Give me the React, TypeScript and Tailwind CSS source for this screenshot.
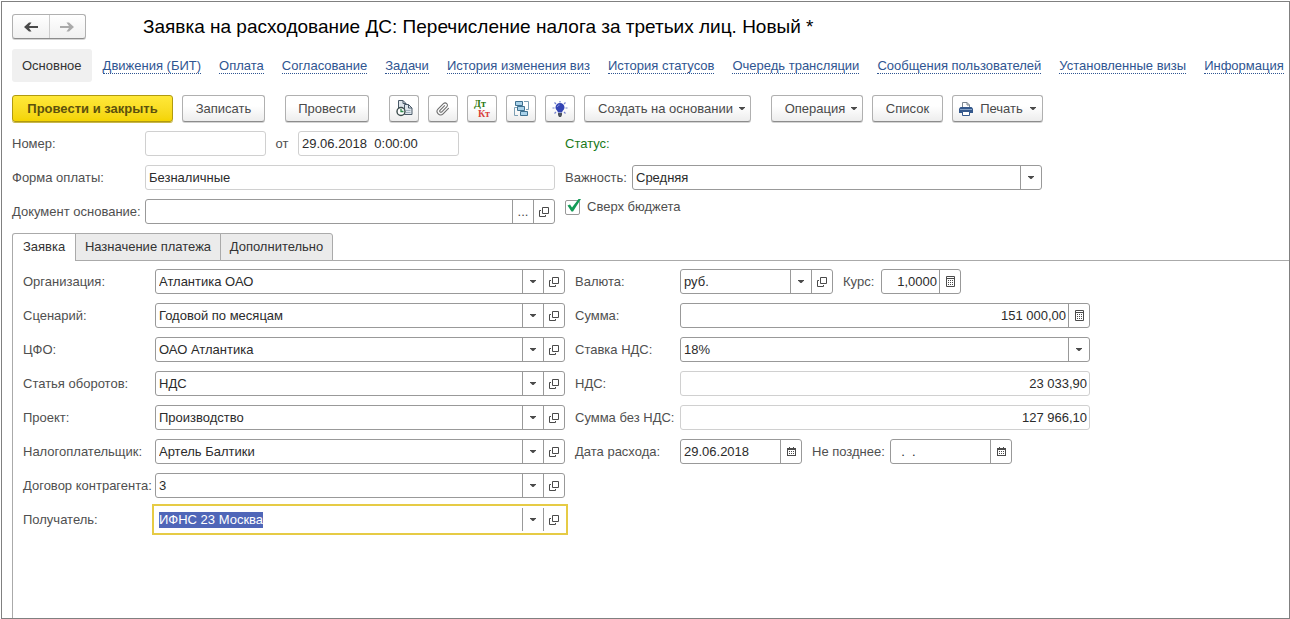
import { useEffect, useRef } from "react";
import type { ReactNode } from "react";

const BUTTON =
  "flex h-[27px] shrink-0 items-center justify-center rounded-[3px] border border-[#b0b0b0] border-b-[#8c8c8c] bg-linear-to-b from-white from-40% to-[#ededed] text-[#4a4a4a] shadow-[0_1px_0_#d4d4d4]";

function CaretIcon() {
  return (
    <svg width="6" height="3" viewBox="0 0 6 3" aria-hidden="true">
      <path d="M0 0h6v.5L3.500 3h-1L0 .5z" fill="#4a4a4a" />
    </svg>
  );
}

function OpenIcon() {
  return (
    <svg width="10" height="10" viewBox="0 0 10 10" fill="none" stroke="#4a4a4a" aria-hidden="true">
      <path d="M3.5 .5h6v6h-6z" />
      <path d="M2 3.5H.5v6h6V8" />
    </svg>
  );
}

function CalculatorIcon() {
  return (
    <svg width="9" height="11" viewBox="0 0 9 11" aria-hidden="true">
      <path d="M.5 .5h8v10h-8zM.5 2.5h8" fill="none" stroke="#4a4a4a" />
      <path
        d="M2 4h1v1H2zM4 4h1v1H4zM6 4h1v1H6zM2 6h1v1H2zM4 6h1v1H4zM6 6h1v1H6zM2 8h1v1H2zM4 8h1v1H4zM6 8h1v1H6z"
        fill="#4a4a4a"
      />
    </svg>
  );
}

function CalendarIcon() {
  return (
    <svg width="9" height="9" viewBox="0 0 9 9" aria-hidden="true">
      <path d="M0 1h2V0h1v1h3V0h1v1h2v8H0z" fill="#4a4a4a" />
      <path d="M1 3h7v5H1z" fill="#fff" />
      <path d="M2 4h1v1H2zM4 4h1v1H4zM6 4h1v1H6zM2 6h1v1H2zM4 6h1v1H4zM6 6h1v1H6z" fill="#4a4a4a" />
    </svg>
  );
}

function ArrowIcon({ back, color }: { back?: boolean; color: string }) {
  return (
    <svg width="14" height="10" viewBox="0 0 14 10" fill={color} aria-hidden="true">
      {back ? (
        <path d="M0 5L5 .5h2.500L5 4h9v2H5l2.500 3.500H5z" />
      ) : (
        <path d="M14 5L9 .5H6.500L9 4H0v2h9L6.500 9.500H9z" />
      )}
    </svg>
  );
}

function ScheduledDocumentIcon() {
  return (
    <svg width="17" height="17" viewBox="0 0 17 17" aria-hidden="true">
      <path d="M2.500 9V.5h4.500l3 3V13h-5" fill="#dfe6ec" stroke="#4a5a68" />
      <path d="M7 .5v3h3" fill="none" stroke="#4a5a68" />
      <path d="M8.500 14.500V4.500h4l3.500 3.500v6.500z" fill="#dfe6ec" stroke="#4a5a68" />
      <path d="M12.500 4.500v3.500H16" fill="none" stroke="#4a5a68" />
      <path d="M10 10.500h4.500M10 12.500h4.500" fill="none" stroke="#9fb0be" />
      <circle cx="5" cy="11.500" r="4" fill="#fff" stroke="#3c4c4c" strokeWidth="1.400" />
      <path d="M5 9v2.500h2.500" fill="none" stroke="#2f8a4c" strokeWidth="1.300" />
    </svg>
  );
}

function PaperclipIcon() {
  return (
    <svg width="14" height="14" viewBox="0 0 24 24" fill="none" stroke="#6d6d6d" strokeWidth="1.800" strokeLinecap="round" aria-hidden="true">
      <path d="M21.400 11l-9.200 9.200a6 6 0 0 1-8.500-8.500l9-9a4 4 0 0 1 5.700 5.700l-8.800 8.800a2 2 0 0 1-2.800-2.800l8-8" />
    </svg>
  );
}

function DebitCreditIcon() {
  return (
    <svg width="18" height="18" viewBox="0 0 18 18" fontFamily="Liberation Serif, serif" fontSize="10" fontWeight="bold" aria-hidden="true">
      <text x="1" y="7" fill="#2c7a12">Дт</text>
      <text x="5" y="17" fill="#d9403a">Кт</text>
    </svg>
  );
}

function StructureIcon() {
  return (
    <svg width="15" height="15" viewBox="0 0 15 15" aria-hidden="true">
      <path d="M10 .5h4.500v8H12M4 14.500H.5v-8H3M5.500 4.500v2M8.500 9v2" fill="none" stroke="#7d9fb3" />
      <g fill="#a9d2ea" stroke="#3f7190">
        <path d="M1.500 .5h7v4h-7zM3.500 5.500h7v4h-7zM6.500 10.500h7v4h-7z" />
      </g>
    </svg>
  );
}

function BulbIcon() {
  return (
    <svg width="16" height="16" viewBox="0 0 16 16" aria-hidden="true">
      <path d="M8 0v1.500M2.500 1.500l1.500 1.500M13.500 1.500L12 3M.5 7h2M13.500 7h2M2.500 12.500L4 11M13.500 12.500L12 11" stroke="#7482cc" strokeWidth="1.200" />
      <path d="M8 2a4.500 4.500 0 0 0-4.500 4.500c0 2.200 2 2.800 2.500 5h4c.5-2.200 2.500-2.800 2.500-5A4.500 4.500 0 0 0 8 2z" fill="#3344b4" />
      <path d="M6 12h4v2L9 16H7l-1-2z" fill="#4c535f" />
      <path d="M5.500 6c0-1.200.8-2 2-2" fill="none" stroke="#8f9be0" />
    </svg>
  );
}

function PrinterIcon() {
  return (
    <svg width="14" height="14" viewBox="0 0 14 14" aria-hidden="true">
      <path d="M3.500 6V.5h4.500l2.500 2.500v3" fill="#fff" stroke="#7d8790" />
      <path d="M8 .5V3h2.500" fill="none" stroke="#7d8790" />
      <path d="M1.500 5h11L14 6.500V11H0V6.500z" fill="#34588c" />
      <path d="M1 7.500h12" stroke="#86a3c8" />
      <path d="M3.500 9.500h7v4h-7z" fill="#fff" stroke="#34588c" />
    </svg>
  );
}

function Box({ children, quiet, focused, className = "" }: { children: ReactNode; quiet?: boolean; focused?: boolean; className?: string }) {
  const tone = focused
    ? "border-transparent outline-2 outline-offset-1 outline-[#e6cb45]"
    : quiet
      ? "rounded-[3px] border-[#d0d0d0]"
      : "rounded-[3px] border-[#999]";
  return <div className={`relative flex h-[25px] min-w-0 border bg-white ${tone} ${className}`}>{children}</div>;
}

function FieldButton({ label, children }: { label: string; children: ReactNode }) {
  return (
    <button type="button" aria-label={label} className="flex w-[21px] shrink-0 items-center justify-center border-l border-[#999] text-[#4a4a4a]">
      {children}
    </button>
  );
}

function TextInput({ id, value, right, readOnly }: { id: string; value: string; right?: boolean; readOnly?: boolean }) {
  return (
    <input
      id={id}
      defaultValue={value}
      readOnly={readOnly}
      className={`w-full min-w-0 flex-1 bg-transparent text-[#2b2b2b] outline-none ${right ? "pr-0.5 text-right" : "pl-[3px]"}`}
    />
  );
}

function Dropdown({ id, value }: { id: string; value: string }) {
  return (
    <div className="relative flex min-w-0 flex-1">
      <select id={id} defaultValue={value} className="w-full min-w-0 appearance-none bg-transparent pr-6 pl-[3px] text-[#2b2b2b] outline-none">
        <option>{value}</option>
      </select>
      <span className="pointer-events-none absolute inset-y-0 right-0 flex w-[21px] items-center justify-center border-l border-[#999]">
        <CaretIcon />
      </span>
    </div>
  );
}

function Label({ id, children, className = "" }: { id: string; children: ReactNode; className?: string }) {
  return (
    <label htmlFor={id} className={`shrink-0 whitespace-nowrap text-[#4f4f4f] ${className}`}>
      {children}
    </label>
  );
}

function ReceiverField() {
  const ref = useRef<HTMLInputElement>(null);
  useEffect(() => {
    ref.current?.focus();
    ref.current?.select();
  }, []);
  return (
    <Box focused className="flex-1">
      <input
        id="receiver"
        ref={ref}
        defaultValue="ИФНС 23 Москва"
        className="w-full min-w-0 flex-1 bg-transparent pl-[3px] text-[#2b2b2b] outline-none selection:bg-[#4f66b8] selection:text-white"
      />
      <FieldButton label="Выбрать получателя">
        <CaretIcon />
      </FieldButton>
      <FieldButton label="Открыть получателя">
        <OpenIcon />
      </FieldButton>
    </Box>
  );
}

const LINKS = [
  "Движения (БИТ)",
  "Оплата",
  "Согласование",
  "Задачи",
  "История изменения виз",
  "История статусов",
  "Очередь трансляции",
  "Сообщения пользователей",
  "Установленные визы",
  "Информация",
];

const TOOLS = [
  { label: "Отложенное проведение", icon: <ScheduledDocumentIcon /> },
  { label: "Присоединенные файлы", icon: <PaperclipIcon /> },
  { label: "Дебет и кредит", icon: <DebitCreditIcon /> },
  { label: "Структура подчиненности", icon: <StructureIcon /> },
  { label: "Подсказка", icon: <BulbIcon /> },
];

const REQUISITES = [
  { id: "organization", label: "Организация:", value: "Атлантика ОАО" },
  { id: "scenario", label: "Сценарий:", value: "Годовой по месяцам" },
  { id: "cfo", label: "ЦФО:", value: "ОАО Атлантика" },
  { id: "article", label: "Статья оборотов:", value: "НДС" },
  { id: "project", label: "Проект:", value: "Производство" },
  { id: "taxpayer", label: "Налогоплательщик:", value: "Артель Балтики" },
  { id: "contract", label: "Договор контрагента:", value: "3" },
];

export default function App() {
  return (
    <div className="flex min-h-screen bg-white pt-px pl-px font-['Liberation_Sans',Arial,sans-serif] text-[13px] leading-4">
      <main className="flex min-w-0 flex-1 flex-col border border-[#808080] pl-[10px]">
        <header className="flex items-center pt-3">
          <div className="flex h-[25px] w-[74px] rounded-[3px] border border-[#b0b0b0] border-b-[#8c8c8c] bg-linear-to-b from-white to-[#f0f0f0] shadow-[0_1px_0_#d4d4d4]">
            <button type="button" aria-label="Назад" className="flex flex-1 items-center justify-center">
              <ArrowIcon back color="#4a4a4a" />
            </button>
            <button type="button" aria-label="Вперед" className="flex flex-1 items-center justify-center border-l border-[#ccc]">
              <ArrowIcon color="#aaa" />
            </button>
          </div>
          <h1 className="ml-[57px] text-[19px] leading-6 whitespace-nowrap text-black">
            Заявка на расходование ДС: Перечисление налога за третьих лиц. Новый *
          </h1>
        </header>

        <nav className="mt-[10px] flex h-[33px] items-center whitespace-nowrap">
          <a href="#main" className="mr-0.5 flex h-full items-center rounded-[3px] bg-[#f0f0f0] px-[10px] text-[#333]">
            Основное
          </a>
          {LINKS.map((link) => (
            <a key={link} href="#section" className="px-[9px] text-[#2f5591]">
              <span className="border-b border-dotted border-[#2f5591]">{link}</span>
            </a>
          ))}
        </nav>

        <div className="mt-[13px] flex items-center gap-5 whitespace-nowrap">
          <div className="flex gap-[9px]">
            <button
              type="button"
              className="flex h-[27px] w-[161px] items-center justify-center rounded-[3px] border border-[#b09a10] bg-linear-to-b from-[#ffe838] to-[#f4d400] font-bold text-[#5c500c] shadow-[0_1px_0_#c9b84a]"
            >
              Провести и закрыть
            </button>
            <button type="button" className={`${BUTTON} w-[83px]`}>Записать</button>
          </div>
          <button type="button" className={`${BUTTON} w-[84px]`}>Провести</button>
          <div className="flex gap-[9px]">
            {TOOLS.map((tool) => (
              <button key={tool.label} type="button" aria-label={tool.label} className={`${BUTTON} w-[30px]`}>
                {tool.icon}
              </button>
            ))}
            <button type="button" className={`${BUTTON} w-[167px] gap-1.5 pl-2`}>
              Создать на основании
              <CaretIcon />
            </button>
          </div>
          <div className="flex gap-[9px]">
            <button type="button" className={`${BUTTON} w-[92px] gap-1.5 pl-2`}>
              Операция
              <CaretIcon />
            </button>
            <button type="button" className={`${BUTTON} w-[71px]`}>Список</button>
            <button type="button" className={`${BUTTON} w-[91px] gap-[7px]`}>
              <PrinterIcon />
              Печать
              <CaretIcon />
            </button>
          </div>
        </div>

        <div className="mt-[9px] grid w-full max-w-[1030px] grid-cols-[minmax(0,543fr)_minmax(0,477fr)] gap-x-[10px] gap-y-[9px]">
          <div className="flex items-center">
            <Label id="number" className="w-[133px]">Номер:</Label>
            <Box quiet className="w-[121px]">
              <TextInput id="number" value="" />
            </Box>
            <Label id="date" className="w-8 text-center">от</Label>
            <Box quiet className="w-[161px]">
              <TextInput id="date" value="29.06.2018  0:00:00" />
            </Box>
          </div>
          <div className="flex items-center text-[#1a7a1a]">Статус:</div>

          <div className="flex items-center">
            <Label id="payment" className="w-[133px]">Форма оплаты:</Label>
            <Box quiet className="flex-1">
              <TextInput id="payment" value="Безналичные" readOnly />
            </Box>
          </div>
          <div className="flex items-center">
            <Label id="priority" className="w-[67px]">Важность:</Label>
            <Box className="flex-1">
              <Dropdown id="priority" value="Средняя" />
            </Box>
          </div>

          <div className="flex items-center">
            <Label id="basis" className="w-[133px]">Документ основание:</Label>
            <Box className="flex-1">
              <TextInput id="basis" value="" />
              <FieldButton label="Выбрать документ">...</FieldButton>
              <FieldButton label="Открыть документ">
                <OpenIcon />
              </FieldButton>
            </Box>
          </div>
          <label className="flex items-center gap-1.5 self-start text-[#4f4f4f]">
            <span className="grid size-4 items-center">
              <input
                type="checkbox"
                defaultChecked
                className="peer col-start-1 row-start-1 size-[15px] appearance-none rounded-[2px] border border-[#999] bg-white"
              />
              <svg
                className="pointer-events-none invisible col-start-1 row-start-1 peer-checked:visible"
                width="16"
                height="16"
                viewBox="0 0 16 16"
                aria-hidden="true"
              >
                <path d="M2.500 6.500L5 5.500l2 3L13.500 0H16L8 12.500H6.500z" fill="#149b57" />
              </svg>
            </span>
            Сверх бюджета
          </label>
        </div>

        <div role="tablist" className="relative z-10 mt-[9px] -mb-px flex h-7 whitespace-nowrap text-[#333]">
          <button type="button" role="tab" aria-selected="true" className="w-16 rounded-tl-[3px] border border-b-0 border-[#aaa] bg-white pb-px">
            Заявка
          </button>
          <button type="button" role="tab" aria-selected="false" className="-ml-px w-[146px] border border-[#aaa] bg-[#ebebeb]">
            Назначение платежа
          </button>
          <button type="button" role="tab" aria-selected="false" className="-ml-px w-[113px] rounded-tr-[3px] border border-[#aaa] bg-[#ebebeb]">
            Дополнительно
          </button>
        </div>

        <section className="flex-1 border-t border-l border-[#aaa] pt-2 pl-[10px]">
          <div className="grid w-full max-w-[1067px] grid-cols-[minmax(0,542fr)_minmax(0,515fr)] gap-x-[10px]">
            <div className="flex flex-col gap-[9px]">
              {REQUISITES.map((field) => (
                <div key={field.id} className="flex items-center">
                  <Label id={field.id} className="w-[132px]">{field.label}</Label>
                  <Box className="flex-1">
                    <Dropdown id={field.id} value={field.value} />
                    <FieldButton label={`Открыть: ${field.label}`}>
                      <OpenIcon />
                    </FieldButton>
                  </Box>
                </div>
              ))}
              <div className="flex items-center">
                <Label id="receiver" className="w-[132px]">Получатель:</Label>
                <ReceiverField />
              </div>
            </div>

            <div className="flex flex-col gap-[9px]">
              <div className="flex items-center">
                <Label id="currency" className="w-[105px]">Валюта:</Label>
                <Box className="w-[153px]">
                  <Dropdown id="currency" value="руб." />
                  <FieldButton label="Открыть валюту">
                    <OpenIcon />
                  </FieldButton>
                </Box>
                <Label id="rate" className="ml-[10px] w-[38px]">Курс:</Label>
                <Box className="w-20">
                  <TextInput id="rate" value="1,0000" right />
                  <FieldButton label="Калькулятор курса">
                    <CalculatorIcon />
                  </FieldButton>
                </Box>
              </div>
              <div className="flex items-center">
                <Label id="amount" className="w-[105px]">Сумма:</Label>
                <Box className="flex-1">
                  <TextInput id="amount" value="151 000,00" right />
                  <FieldButton label="Калькулятор суммы">
                    <CalculatorIcon />
                  </FieldButton>
                </Box>
              </div>
              <div className="flex items-center">
                <Label id="vat-rate" className="w-[105px]">Ставка НДС:</Label>
                <Box className="flex-1">
                  <Dropdown id="vat-rate" value="18%" />
                </Box>
              </div>
              <div className="flex items-center">
                <Label id="vat" className="w-[105px]">НДС:</Label>
                <Box quiet className="flex-1">
                  <TextInput id="vat" value="23 033,90" right readOnly />
                </Box>
              </div>
              <div className="flex items-center">
                <Label id="net" className="w-[105px]">Сумма без НДС:</Label>
                <Box quiet className="flex-1">
                  <TextInput id="net" value="127 966,10" right readOnly />
                </Box>
              </div>
              <div className="flex items-center">
                <Label id="expense-date" className="w-[105px]">Дата расхода:</Label>
                <Box className="w-[122px]">
                  <TextInput id="expense-date" value="29.06.2018" />
                  <FieldButton label="Календарь даты расхода">
                    <CalendarIcon />
                  </FieldButton>
                </Box>
                <Label id="deadline" className="ml-[10px] w-[78px]">Не позднее:</Label>
                <Box className="w-[122px]">
                  <TextInput id="deadline" value="  .  ." />
                  <FieldButton label="Календарь крайней даты">
                    <CalendarIcon />
                  </FieldButton>
                </Box>
              </div>
            </div>
          </div>
        </section>
      </main>
    </div>
  );
}
